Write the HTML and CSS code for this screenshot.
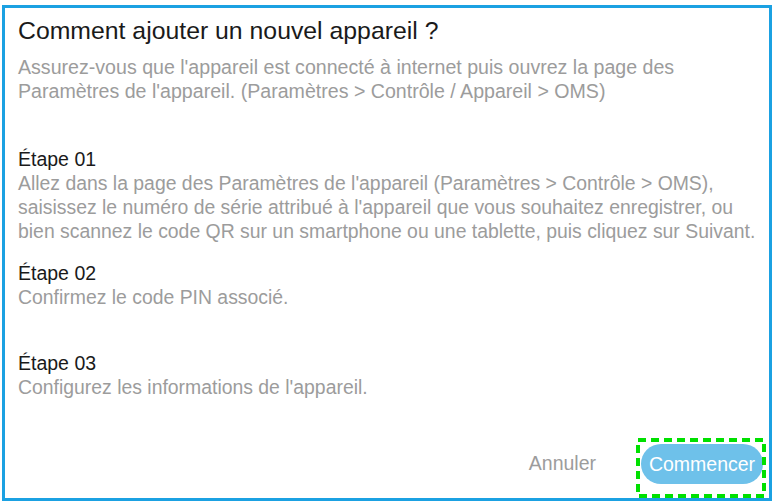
FILE: index.html
```html
<!DOCTYPE html>
<html lang="fr">
<head>
<meta charset="utf-8">
<link rel="stylesheet" href="styles.css">
</head>
<body>
<div class="dialog">
  <h1 class="title">Comment ajouter un nouvel appareil ?</h1>
  <p class="intro">Assurez-vous que l'appareil est connecté à internet puis ouvrez la page des<br>Paramètres de l'appareil. (Paramètres &gt; Contrôle / Appareil &gt; OMS)</p>
  <div class="step step1">
    <div class="step-title">Étape 01</div>
    <p class="step-text">Allez dans la page des Paramètres de l'appareil (Paramètres &gt; Contrôle &gt; OMS),<br>saisissez le numéro de série attribué à l'appareil que vous souhaitez enregistrer, ou<br>bien scannez le code QR sur un smartphone ou une tablette, puis cliquez sur Suivant.</p>
  </div>
  <div class="step step2">
    <div class="step-title">Étape 02</div>
    <p class="step-text">Confirmez le code PIN associé.</p>
  </div>
  <div class="step step3">
    <div class="step-title">Étape 03</div>
    <p class="step-text">Configurez les informations de l'appareil.</p>
  </div>
  <div class="actions">
    <button class="btn-cancel">Annuler</button>
    <span class="focus-wrap">
      <button class="btn-start">Commencer</button>
      <svg class="focus-ring" width="130" height="60" viewBox="0 0 130 60" aria-hidden="true">
        <rect x="2" y="2" width="126" height="56" fill="none" stroke="#00e000" stroke-width="4" stroke-dasharray="8 5"/>
      </svg>
    </span>
  </div>
</div>
</body>
</html>
```
FILE: styles.css
```css
* { box-sizing: border-box; }
html, body { margin: 0; padding: 0; background: #ffffff; }
body {
  font-family: "Liberation Sans", Arial, sans-serif;
  width: 776px;
  height: 501px;
  overflow: hidden;
}
.dialog {
  margin: 5px 0 0 2px;
  width: 770px;
  height: 496px;
  border: 3px solid #1ba1e2;
  padding: 8px 14px 0 13px;
  display: flex;
  flex-direction: column;
  white-space: nowrap;
}
.title {
  margin: 0;
  font-size: 24.8px;
  font-weight: normal;
  color: #1a1a1a;
  line-height: 30px;
}
.intro {
  margin: 9px 0 0 0;
  font-size: 19.6px;
  line-height: 24px;
  color: #9c9c9c;
}
.step { margin: 0; }
.step1 { margin-top: 44px; }
.step2 { margin-top: 18px; }
.step3 { margin-top: 42px; }
.step-title {
  font-size: 19.5px;
  line-height: 24px;
  color: #1a1a1a;
}
.step-text {
  margin: 0;
  font-size: 19.4px;
  line-height: 24px;
  color: #9c9c9c;
}
.actions {
  margin-top: auto;
  margin-right: -11px;
  display: flex;
  justify-content: flex-end;
  align-items: flex-start;
  gap: 40px;
}
.btn-cancel {
  border: none;
  background: none;
  font-family: inherit;
  font-size: 19.5px;
  color: #9c9c9c;
  padding: 0;
  margin-top: 13px;
  line-height: 24px;
}
.focus-wrap {
  position: relative;
  display: block;
  width: 130px;
  height: 60px;
  padding: 6px 0 0 5px;
}
.btn-start {
  display: block;
  border: none;
  background: #6ec1ea;
  color: #ffffff;
  font-family: inherit;
  font-size: 19.5px;
  width: 122px;
  height: 40px;
  padding: 0;
  border-radius: 20px;
}
.focus-ring {
  position: absolute;
  left: 0;
  top: 0;
}
```
